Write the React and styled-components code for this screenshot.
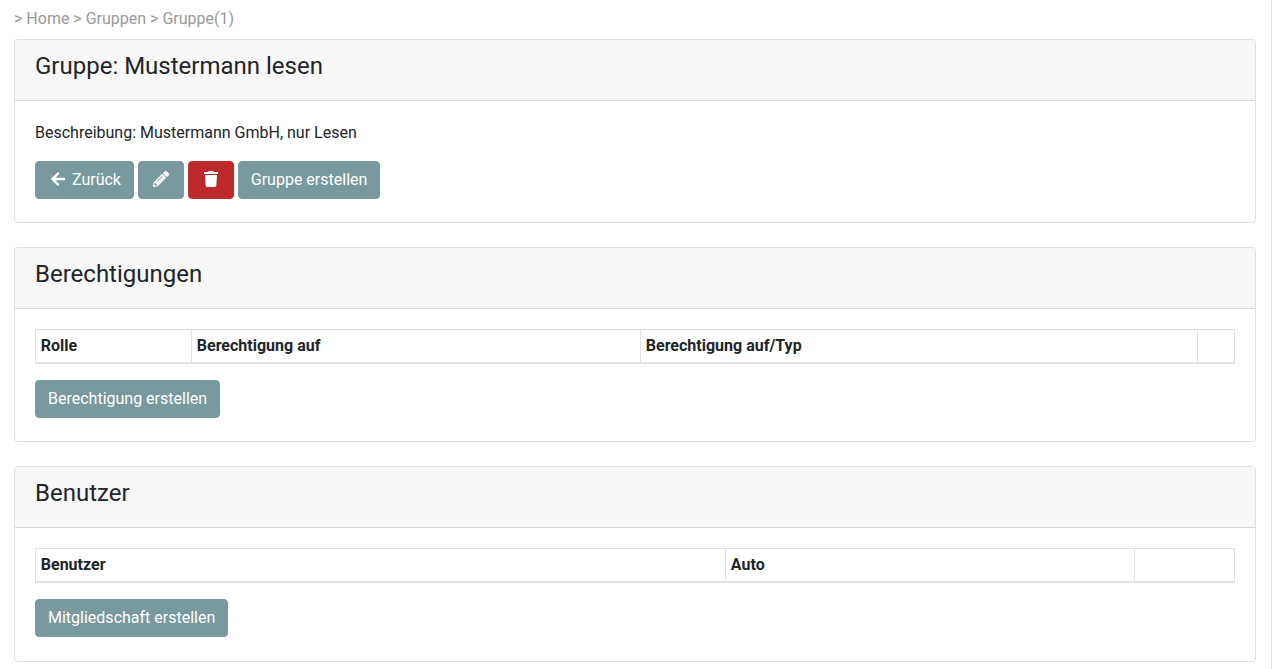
import React from 'react';
import styled, { createGlobalStyle } from 'styled-components';
import { FaArrowLeft, FaPencilAlt, FaTrash } from 'react-icons/fa';

const GlobalStyle = createGlobalStyle`
  *, *::before, *::after { box-sizing: border-box; }
  body {
    margin: 0;
    background: #fff;
    color: #212529;
    font: 400 16px/1.5 Roboto, sans-serif;
    overflow: hidden;
  }
`;

const Page = styled.main`
  height: 669px;
  padding: 7px 15px 0 14px;
  border-right: 1px solid #dee2e6;
`;

const Breadcrumb = styled.nav`
  height: 32px;
  color: #999;
`;

const Card = styled.section`
  margin-bottom: 24px;
  border: 1px solid #dfdfdf;
  border-radius: 4px;
  background: #fff;
`;

const CardHeader = styled.header`
  height: 61px;
  padding: 12px 20px;
  border-bottom: 1px solid #d8d8d8;
  border-radius: 3px 3px 0 0;
  background: #f7f7f7;
`;

const Title = styled.h4`
  margin: 0;
  font-size: 24px;
  font-weight: 400;
  line-height: 28.8px;
`;

const CardBody = styled.div`
  padding: 20px 20px 23.2px;
`;

const Description = styled.p`
  margin: 0 0 16px;
`;

const ButtonRow = styled.div`
  display: flex;
  gap: 3.96px;
`;

const Button = styled.button`
  display: inline-flex;
  align-items: center;
  gap: 3.96px;
  height: 38px;
  padding: 6px 12px;
  border: 1px solid ${(p) => (p.$danger ? '#be2a2b' : '#78999d')};
  border-radius: 4px;
  background: ${(p) => (p.$danger ? '#be2a2b' : '#78999d')};
  color: #fff;
  font: inherit;
  white-space: nowrap;
`;

const IconSlot = styled.span`
  display: flex;
  justify-content: center;
  width: 20px;
  padding-bottom: 2px;
`;

const Table = styled.table`
  width: 100%;
  margin-bottom: 16px;
  border-collapse: collapse;
  table-layout: fixed;
`;

const HeadCell = styled.th`
  width: ${(p) => p.$width}px;
  height: 33px;
  padding: 4px 4.8px;
  border: 1px solid #dee2e6;
  border-bottom-width: 2px;
  font-weight: 700;
  text-align: left;
`;

function Panel({ title, children }) {
  return (
    <Card>
      <CardHeader><Title>{title}</Title></CardHeader>
      <CardBody>{children}</CardBody>
    </Card>
  );
}

function HeadTable({ columns }) {
  return (
    <Table>
      <thead>
        <tr>
          {columns.map(([label, width]) => (
            <HeadCell key={width} $width={width}>{label}</HeadCell>
          ))}
        </tr>
      </thead>
    </Table>
  );
}

export default function App() {
  return (
    <>
      <GlobalStyle />
      <Page>
        <Breadcrumb>&gt; Home &gt; Gruppen &gt; Gruppe(1)</Breadcrumb>
        <Panel title="Gruppe: Mustermann lesen">
          <Description>Beschreibung: Mustermann GmbH, nur Lesen</Description>
          <ButtonRow>
            <Button><IconSlot><FaArrowLeft /></IconSlot>Zurück</Button>
            <Button aria-label="Bearbeiten"><IconSlot><FaPencilAlt /></IconSlot></Button>
            <Button $danger aria-label="Löschen"><IconSlot><FaTrash /></IconSlot></Button>
            <Button>Gruppe erstellen</Button>
          </ButtonRow>
        </Panel>
        <Panel title="Berechtigungen">
          <HeadTable columns={[['Rolle', 156], ['Berechtigung auf', 449], ['Berechtigung auf/Typ', 557], ['', 37]]} />
          <ButtonRow><Button>Berechtigung erstellen</Button></ButtonRow>
        </Panel>
        <Panel title="Benutzer">
          <HeadTable columns={[['Benutzer', 690], ['Auto', 409], ['', 100]]} />
          <ButtonRow><Button>Mitgliedschaft erstellen</Button></ButtonRow>
        </Panel>
      </Page>
    </>
  );
}
